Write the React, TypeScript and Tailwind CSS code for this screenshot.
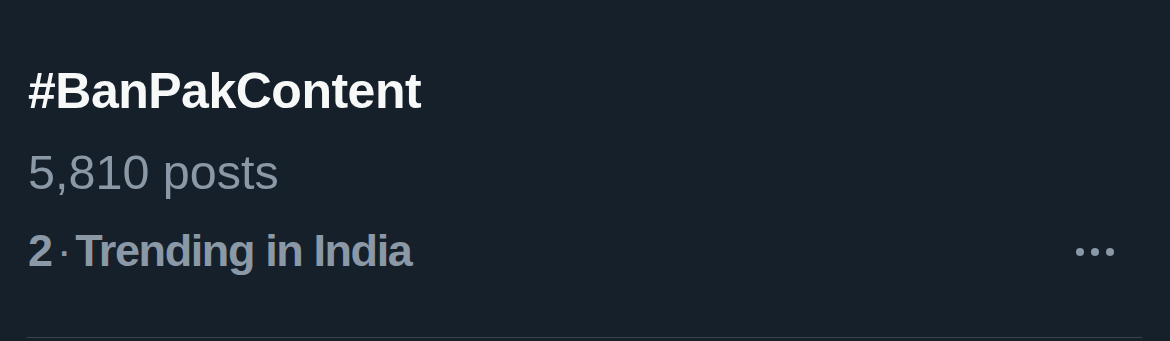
import { MoreHorizontal } from 'lucide-react';

export default function App() {
  return (
    <div className="flex h-[341px] w-[1170px] flex-col bg-[#16202b] font-['Liberation_Sans',Arial,sans-serif]">
      <div className="flex flex-1 items-start justify-between pl-[28px] pr-[20px] pt-[62px]">
        <div className="flex flex-col">
          <div className="text-[50px] font-bold leading-[58px] tracking-[-0.5px] text-[#f7f9f9]">#BanPakContent</div>
          <div className="mt-[23px] text-[48.5px] leading-[58px] text-[#8b98a5]">5,810 posts</div>
          <div className="mt-[21px] flex items-center text-[45px] font-bold leading-[58px] tracking-[-1.4px] text-[#8b98a5]">
            <span>2</span>
            <span className="mx-[5px] font-normal">·</span>
            <span>Trending in India</span>
          </div>
        </div>
        <div className="mr-[36px] mt-[186px] flex gap-[7px]">
          <span className="h-[8px] w-[8px] rounded-full bg-[#8b98a5]" />
          <span className="h-[8px] w-[8px] rounded-full bg-[#8b98a5]" />
          <span className="h-[8px] w-[8px] rounded-full bg-[#8b98a5]" />
        </div>
      </div>
      <div className="mb-[3px] ml-[27px] mr-[28px] h-px bg-[#38444d]" />
    </div>
  );
}
